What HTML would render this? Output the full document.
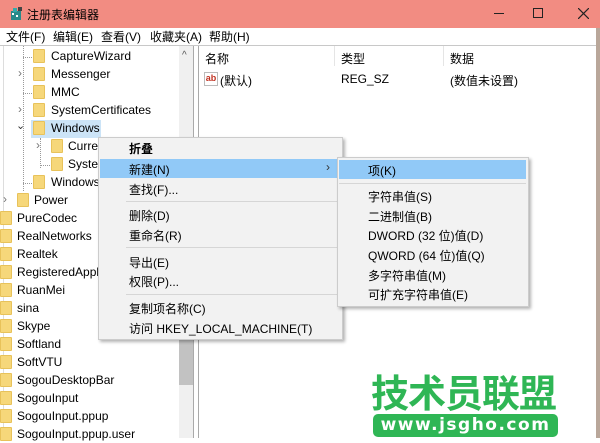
<!DOCTYPE html>
<html><head><meta charset="utf-8"><style>
*{margin:0;padding:0;box-sizing:border-box}
body{width:600px;height:438px;overflow:hidden;background:#fff;font-family:"Liberation Sans","Noto Sans CJK SC",sans-serif;font-size:12px;color:#000;position:relative}
.a{position:absolute;white-space:nowrap}
.f{position:absolute;width:12px;height:14px;background:#f6d77a;border:1px solid #e8c25a;border-radius:1px}
.t{position:absolute;line-height:18px;height:18px}
.dot{position:absolute;border-left:1px dotted #999}
.hd{position:absolute;border-top:1px dotted #999}
.sep{position:absolute;height:1px;background:#d6d6d6}
</style></head><body>
<!-- title -->
<div class="a" style="left:0;top:0;width:600px;height:28px;background:#f28c82"></div>
<svg class="a" style="left:8px;top:6px" width="16" height="16"><rect x="3" y="5" width="10" height="9" fill="#2a8a8a"/><rect x="5" y="2" width="4" height="4" fill="#3aa"/><rect x="10" y="1" width="4" height="4" fill="#444"/><rect x="4" y="7" width="2" height="2" fill="#fff"/><rect x="8" y="9" width="2" height="2" fill="#fff"/></svg>
<div class="a" style="left:27px;top:6px;font-size:12px">注册表编辑器</div>
<div class="a" style="left:494px;top:13px;width:10px;height:1px;background:#222"></div>
<div class="a" style="left:533px;top:8px;width:10px;height:10px;border:1px solid #222"></div>
<svg class="a" style="left:578px;top:8px" width="11" height="11"><path d="M0 0L11 11M11 0L0 11" stroke="#222" stroke-width="1.2"/></svg>
<!-- menu -->
<div class="a" style="left:6px;top:29px;line-height:16px">文件(F)</div>
<div class="a" style="left:53px;top:29px;line-height:16px">编辑(E)</div>
<div class="a" style="left:101px;top:29px;line-height:16px">查看(V)</div>
<div class="a" style="left:150px;top:29px;line-height:16px">收藏夹(A)</div>
<div class="a" style="left:209px;top:29px;line-height:16px">帮助(H)</div>
<div class="a" style="left:0;top:45px;width:600px;height:1px;background:#c8c8c8"></div>
<!-- tree panel -->
<div class="a" style="left:3px;top:46px;width:1px;height:392px;background:#ddd"></div>
<div class="a" style="left:179px;top:46px;width:14px;height:392px;background:#f0f0f0"></div>
<div class="a" style="left:182px;top:50px;font-size:10px;color:#555">^</div>
<div class="a" style="left:179px;top:270px;width:14px;height:115px;background:#c2c2c2"></div>
<div class="a" style="left:193px;top:46px;width:1px;height:392px;background:#aaa"></div>
<div class="a" style="left:198px;top:46px;width:1px;height:392px;background:#aaa"></div>
<div class="a" style="left:596px;top:28px;width:4px;height:410px;background:#b9a79a"></div>

<div class="dot" style="left:23px;top:46px;height:145px"></div>
<div class="dot" style="left:40px;top:138px;height:30px"></div>
<div class="hd" style="left:23px;top:57px;width:9px"></div>
<div class="hd" style="left:23px;top:93px;width:9px"></div>
<div class="hd" style="left:23px;top:183px;width:9px"></div>
<div class="hd" style="left:40px;top:165px;width:10px"></div>
<div class="a" style="left:18px;top:66px;color:#777">›</div>
<div class="a" style="left:18px;top:102px;color:#777">›</div>
<div class="a" style="left:16px;top:119px;color:#333;font-size:11px">⌄</div>
<div class="a" style="left:36px;top:138px;color:#777">›</div>
<div class="a" style="left:3px;top:192px;color:#777">›</div>
<div class="a" style="left:31px;top:120px;width:70px;height:18px;background:#cce4f7"></div>

<div class="f" style="left:33px;top:49px"></div><div class="t" style="left:51px;top:47px">CaptureWizard</div>
<div class="f" style="left:33px;top:67px"></div><div class="t" style="left:51px;top:65px">Messenger</div>
<div class="f" style="left:33px;top:85px"></div><div class="t" style="left:51px;top:83px">MMC</div>
<div class="f" style="left:33px;top:103px"></div><div class="t" style="left:51px;top:101px">SystemCertificates</div>
<div class="f" style="left:33px;top:121px"></div><div class="t" style="left:51px;top:119px">Windows</div>
<div class="f" style="left:51px;top:139px"></div><div class="t" style="left:68px;top:137px">Current</div>
<div class="f" style="left:51px;top:157px"></div><div class="t" style="left:68px;top:155px">System</div>
<div class="f" style="left:33px;top:175px"></div><div class="t" style="left:51px;top:173px">Windows</div>
<div class="f" style="left:17px;top:193px"></div><div class="t" style="left:34px;top:191px">Power</div>
<div class="f" style="left:0;top:211px"></div><div class="t" style="left:17px;top:209px">PureCodec</div>
<div class="f" style="left:0;top:229px"></div><div class="t" style="left:17px;top:227px">RealNetworks</div>
<div class="f" style="left:0;top:247px"></div><div class="t" style="left:17px;top:245px">Realtek</div>
<div class="f" style="left:0;top:265px"></div><div class="t" style="left:17px;top:263px;width:81px;overflow:hidden">RegisteredApplications</div>
<div class="f" style="left:0;top:283px"></div><div class="t" style="left:17px;top:281px">RuanMei</div>
<div class="f" style="left:0;top:301px"></div><div class="t" style="left:17px;top:299px">sina</div>
<div class="f" style="left:0;top:319px"></div><div class="t" style="left:17px;top:317px">Skype</div>
<div class="f" style="left:0;top:337px"></div><div class="t" style="left:17px;top:335px">Softland</div>
<div class="f" style="left:0;top:355px"></div><div class="t" style="left:17px;top:353px">SoftVTU</div>
<div class="f" style="left:0;top:373px"></div><div class="t" style="left:17px;top:371px">SogouDesktopBar</div>
<div class="f" style="left:0;top:391px"></div><div class="t" style="left:17px;top:389px">SogouInput</div>
<div class="f" style="left:0;top:409px"></div><div class="t" style="left:17px;top:407px">SogouInput.ppup</div>
<div class="f" style="left:0;top:427px"></div><div class="t" style="left:17px;top:425px">SogouInput.ppup.user</div>

<!-- right pane -->
<div class="a" style="left:205px;top:50px">名称</div>
<div class="a" style="left:341px;top:50px">类型</div>
<div class="a" style="left:450px;top:50px">数据</div>
<div class="a" style="left:334px;top:46px;width:1px;height:20px;background:#e5e5e5"></div>
<div class="a" style="left:443px;top:46px;width:1px;height:20px;background:#e5e5e5"></div>
<div class="a" style="left:204px;top:72px;width:14px;height:14px;border:1px solid #bbb;color:#c03020;font-size:9px;font-weight:bold;line-height:11px;text-align:center">ab</div>
<div class="a" style="left:220px;top:72px">(默认)</div>
<div class="a" style="left:341px;top:72px">REG_SZ</div>
<div class="a" style="left:450px;top:72px">(数值未设置)</div>

<!-- context menu -->
<div class="a" style="left:98px;top:137px;width:245px;height:203px;background:#f2f2f2;border:1px solid #ccc;box-shadow:2px 2px 3px rgba(0,0,0,.3)"></div>
<div class="a" style="left:100px;top:159px;width:241px;height:19px;background:#91c9f7"></div>
<div class="a" style="left:129px;top:140px;font-weight:bold">折叠</div>
<div class="a" style="left:129px;top:161px">新建(N)</div>
<div class="a" style="left:326px;top:160px;color:#333">›</div>
<div class="a" style="left:129px;top:181px">查找(F)...</div>
<div class="sep" style="left:126px;top:201px;width:214px"></div>
<div class="a" style="left:129px;top:207px">删除(D)</div>
<div class="a" style="left:129px;top:227px">重命名(R)</div>
<div class="sep" style="left:126px;top:247px;width:214px"></div>
<div class="a" style="left:129px;top:254px">导出(E)</div>
<div class="a" style="left:129px;top:273px">权限(P)...</div>
<div class="sep" style="left:126px;top:294px;width:214px"></div>
<div class="a" style="left:129px;top:300px">复制项名称(C)</div>
<div class="a" style="left:129px;top:320px">访问 HKEY_LOCAL_MACHINE(T)</div>

<!-- submenu -->
<div class="a" style="left:337px;top:157px;width:192px;height:150px;background:#f2f2f2;border:1px solid #ccc;box-shadow:2px 2px 3px rgba(0,0,0,.3)"></div>
<div class="a" style="left:339px;top:160px;width:187px;height:19px;background:#91c9f7"></div>
<div class="a" style="left:368px;top:162px">项(K)</div>
<div class="sep" style="left:339px;top:183px;width:187px"></div>
<div class="a" style="left:368px;top:188px">字符串值(S)</div>
<div class="a" style="left:368px;top:208px">二进制值(B)</div>
<div class="a" style="left:368px;top:227px">DWORD (32 位)值(D)</div>
<div class="a" style="left:368px;top:247px">QWORD (64 位)值(Q)</div>
<div class="a" style="left:368px;top:267px">多字符串值(M)</div>
<div class="a" style="left:368px;top:286px">可扩充字符串值(E)</div>

<!-- watermark -->
<div class="a" style="left:371px;top:366px;font-size:38px;font-weight:bold;color:#2fb655;letter-spacing:-1px;font-family:'Noto Sans CJK SC',sans-serif;line-height:50px">技术员联盟</div>
<div class="a" style="left:373px;top:414px;width:185px;height:23px;background:#2fb655;border-radius:5px;color:#fff;font-size:17px;font-weight:bold;text-align:center;line-height:23px;letter-spacing:1.5px;font-family:'DejaVu Sans',sans-serif">www.jsgho.com</div>
</body></html>
